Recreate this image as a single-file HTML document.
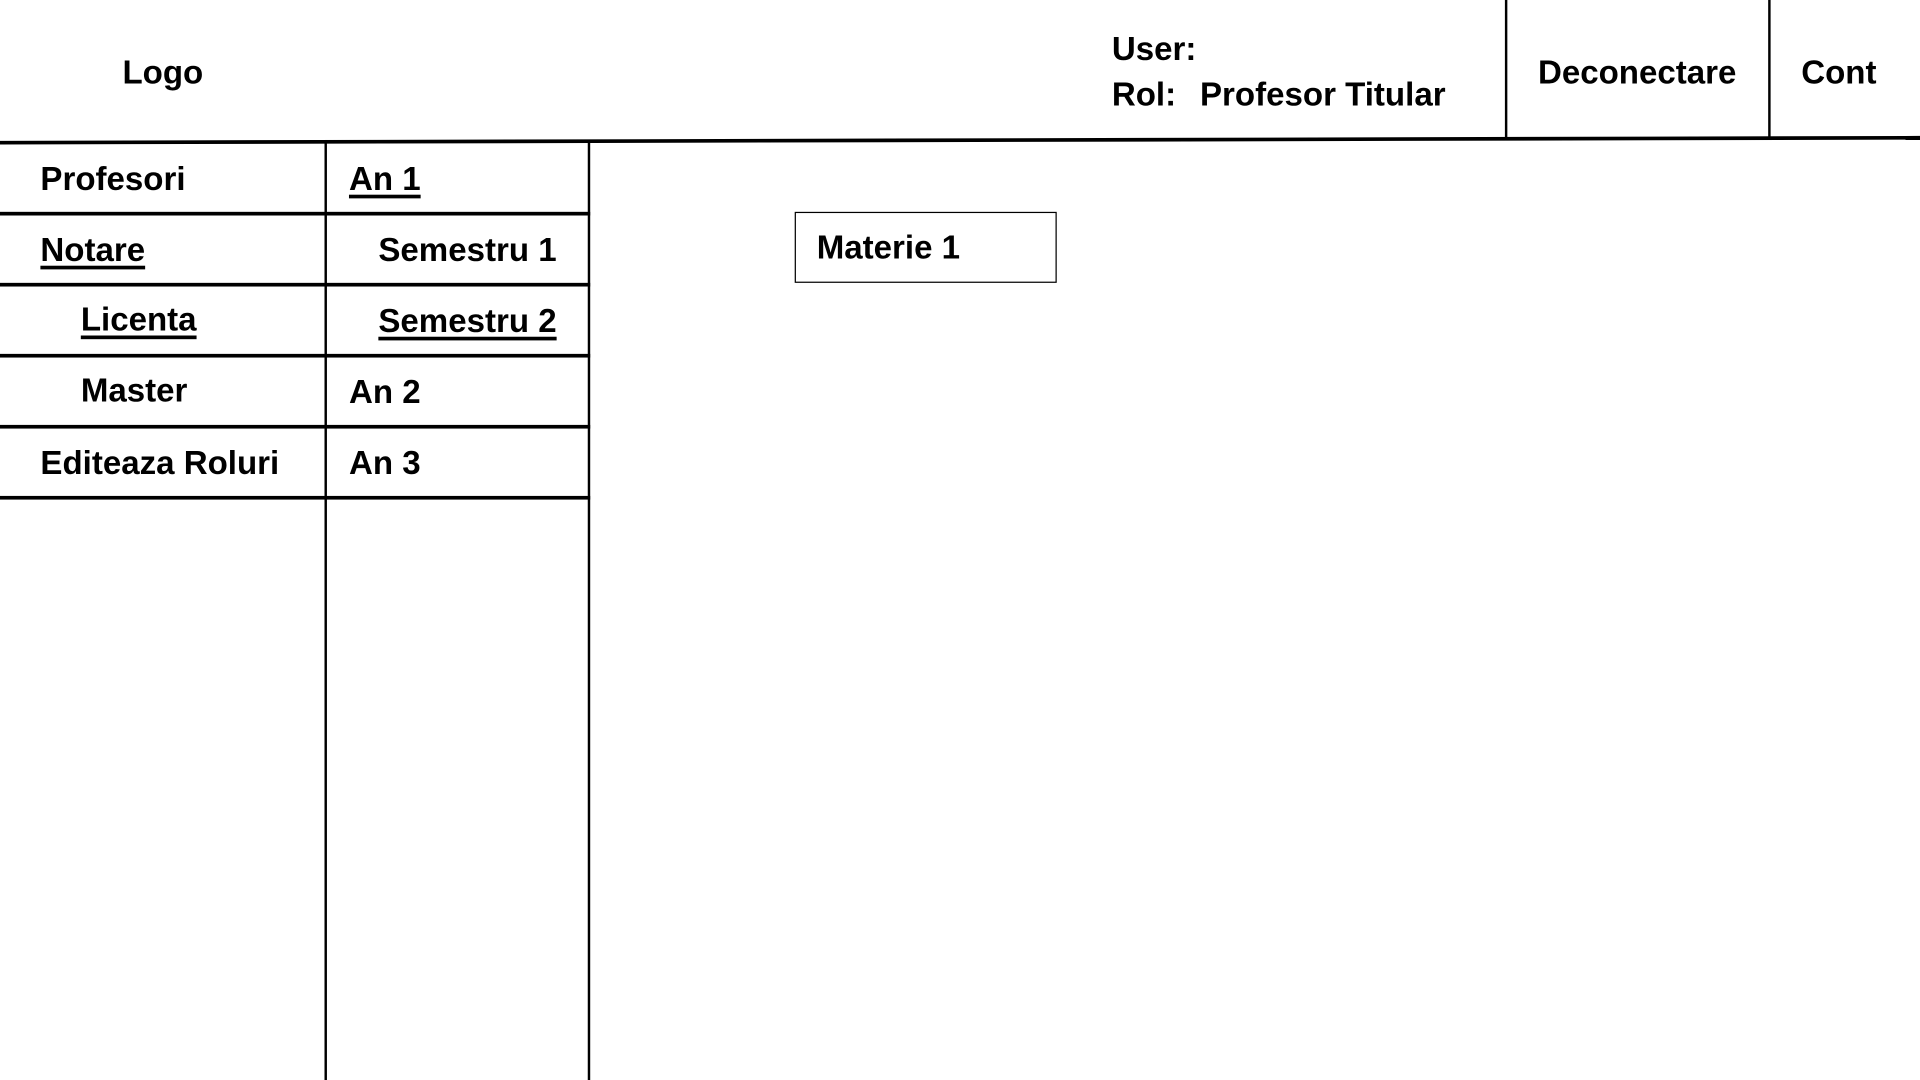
<!DOCTYPE html>
<html><head><meta charset="utf-8"><style>
html,body{margin:0;padding:0;width:1920px;height:1080px;overflow:hidden;background:#fff}
#w{position:absolute;left:0;top:0;width:1568px;height:882px;transform:scale(1.22449);transform-origin:0 0}
.t{position:absolute;font-family:"Liberation Sans",Arial,sans-serif;font-weight:bold;font-size:27px;line-height:30px;color:#000;white-space:nowrap}
.u{text-decoration:underline;text-decoration-thickness:3px;text-underline-offset:4px}
.h{position:absolute;background:#000;height:3px}
.v{position:absolute;background:#000;width:2px}
</style></head><body><div id="w">
<svg style="position:absolute;left:0;top:0" width="1568" height="130"><polygon points="0,115 1568,111 1568,114 0,118" fill="#000"/></svg>
<div class="v" style="left:1229px;top:0;height:114px"></div>
<div class="v" style="left:1444px;top:0;height:113px"></div>
<div class="v" style="left:265px;top:116px;height:766px"></div>
<div class="v" style="left:480px;top:115px;height:767px"></div>
<div class="h" style="left:0;top:173px;width:482px"></div>
<div class="h" style="left:0;top:231px;width:482px"></div>
<div class="h" style="left:0;top:289px;width:482px"></div>
<div class="h" style="left:0;top:347px;width:482px"></div>
<div class="h" style="left:0;top:405px;width:482px"></div>
<div style="position:absolute;left:649px;top:173px;width:212px;height:56px;border:1px solid #000"></div>
<span class="t" style="left:100px;top:44px">Logo</span>
<span class="t" style="left:908px;top:25px">User:</span>
<span class="t" style="left:908px;top:62px">Rol:</span>
<span class="t" style="left:980px;top:62px">Profesor Titular</span>
<span class="t" style="left:1256px;top:44px">Deconectare</span>
<span class="t" style="left:1471px;top:44px">Cont</span>
<span class="t" style="left:33px;top:131px">Profesori</span>
<span class="t u" style="left:33px;top:189px">Notare</span>
<span class="t u" style="left:66px;top:246px">Licenta</span>
<span class="t" style="left:66px;top:304px">Master</span>
<span class="t" style="left:33px;top:363px">Editeaza Roluri</span>
<span class="t u" style="left:285px;top:131px">An 1</span>
<span class="t" style="left:309px;top:189px">Semestru 1</span>
<span class="t u" style="left:309px;top:247px">Semestru 2</span>
<span class="t" style="left:285px;top:305px">An 2</span>
<span class="t" style="left:285px;top:363px">An 3</span>
<span class="t" style="left:667px;top:187px">Materie 1</span>
</div></body></html>
